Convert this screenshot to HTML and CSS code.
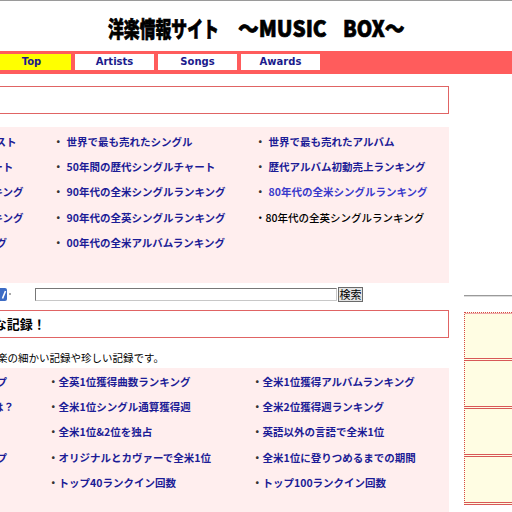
FILE: index.html
```html
<!DOCTYPE html>
<html lang="ja">
<head>
<meta charset="utf-8">
<title>洋楽情報サイト ～MUSIC BOX～</title>
<link rel="stylesheet" href="styles.css">
</head>
<body>
<header class="header">
  <h1 class="site-title"><span class="t-part t-jp"><span class="t-text">洋楽情報サイト　</span></span><span class="t-part t-en1"><span class="t-text">～MUSIC　</span></span><span class="t-part t-en2"><span class="t-text">BOX～</span></span></h1>
  <nav class="nav">
    <a class="tab tab-active" href="#">Top</a>
    <a class="tab" href="#">Artists</a>
    <a class="tab" href="#">Songs</a>
    <a class="tab" href="#">Awards</a>
  </nav>
</header>
<div class="page">
  <main class="main">
    <h2 class="box-title">歴代ランキング</h2>
    <ul class="panel panel-rank">
      <li>・<a href="#">全米1位獲得アーティストリスト</a></li>
      <li>・<a href="#">世界で最も売れたシングル</a></li>
      <li>・<a href="#">世界で最も売れたアルバム</a></li>
      <li>・<a href="#">60年代の全米シングルチャート</a></li>
      <li>・<a href="#">50年間の歴代シングルチャート</a></li>
      <li>・<a href="#">歴代アルバム初動売上ランキング</a></li>
      <li>・<a href="#">70年代の全米シングルランキング</a></li>
      <li>・<a href="#">90年代の全米シングルランキング</a></li>
      <li>・<a class="hover" href="#">80年代の全米シングルランキング</a></li>
      <li>・<a href="#">70年代の全英シングルランキング</a></li>
      <li>・<a href="#">90年代の全英シングルランキング</a></li>
      <li class="plain">・80年代の全英シングルランキング</li>
      <li>・<a href="#">全米1位連続獲得週ランキング</a></li>
      <li>・<a href="#">00年代の全米アルバムランキング</a></li>
      <li></li>
    </ul>
    <form class="search" action="#">
      <svg class="g-icon" width="16" height="13" viewBox="0 0 16 13"><rect x="0" y="0" width="16" height="13" rx="2" fill="#3d6cc4"/><path d="M11.5 10.5 L14.5 3" stroke="#fff" stroke-width="1.6" fill="none"/></svg>
      <span class="dot"></span>
      <input class="search-input" type="text">
      <button class="search-btn" type="button">検索</button>
    </form>
    <h2 class="box-title">全米チャートの様々な記録！</h2>
    <p class="desc">ビルボードを中心とした洋楽の細かい記録や珍しい記録です。</p>
    <ul class="panel panel-record">
      <li>・<a href="#">全米1位獲得数のトップグループ</a></li>
      <li>・<a href="#">全英1位獲得曲数ランキング</a></li>
      <li>・<a href="#">全米1位獲得アルバムランキング</a></li>
      <li>・<a href="#">トップ10入りが最も多い歌手は？</a></li>
      <li>・<a href="#">全米1位シングル通算獲得週</a></li>
      <li>・<a href="#">全米2位獲得週ランキング</a></li>
      <li>・<a href="#">全米1位獲得数ランキング</a></li>
      <li>・<a href="#">全米1位&amp;2位を独占</a></li>
      <li>・<a href="#">英語以外の言語で全米1位</a></li>
      <li>・<a href="#">全英1位獲得数のトップグループ</a></li>
      <li>・<a href="#">オリジナルとカヴァーで全米1位</a></li>
      <li>・<a href="#">全米1位に登りつめるまでの期間</a></li>
      <li>・<a href="#">トップ10ランクイン回数</a></li>
      <li>・<a href="#">トップ40ランクイン回数</a></li>
      <li>・<a href="#">トップ100ランクイン回数</a></li>
    </ul>
  </main>
  <aside class="side">
    <hr class="side-rule">
    <div class="side-box">
      <div class="side-item first"></div>
      <div class="side-item"></div>
      <div class="side-item"></div>
      <div class="side-item"></div>
    </div>
  </aside>
</div>
</body>
</html>
```
FILE: styles.css
```css
html {
  overflow: hidden;
}
body {
  margin: 0;
  background: #fff;
  color: #000;
  font-family: "Noto Sans CJK JP", sans-serif;
}
.header {
  border-top: 1px solid #9a9a9a;
}
.site-title {
  margin: 0;
  height: 50px;
  padding-top: 2px;
  box-sizing: border-box;
  display: flex;
  justify-content: center;
  align-items: center;
  font-weight: 900;
  line-height: 1;
  white-space: nowrap;
  -webkit-text-stroke: 0.7px #000;
}
.t-part {
  flex: none;
  display: block;
}
.t-text {
  display: inline-block;
  transform-origin: left center;
}
.t-jp {
  width: 130px;
  font-size: 22px;
}
.t-jp .t-text {
  transform: scaleX(0.72);
}
.t-en1 {
  width: 105px;
  font-size: 23px;
}
.t-en1 .t-text {
  transform: scaleX(0.9);
}
.t-en2 {
  width: 61px;
  font-size: 23px;
}
.t-en2 .t-text {
  transform: scaleX(0.86);
}
.nav {
  display: flex;
  gap: 4px;
  height: 23px;
  padding: 3px 0 4px;
  box-sizing: border-box;
  background: #ff5c5c;
}
.tab {
  flex: none;
  width: 79px;
  height: 16px;
  line-height: 16px;
  text-align: center;
  background: #fff;
  color: #1a1a8c;
  font-family: "DejaVu Sans", sans-serif;
  font-size: 10px;
  font-weight: bold;
  text-decoration: none;
}
.tab:first-child {
  margin-left: -8px;
}
.tab-active {
  background: #ffff00;
}
.page {
  display: flex;
  align-items: flex-start;
  margin: 12px 0 0 -160px;
}
.main {
  flex: none;
  width: 609px;
}
.side {
  flex: none;
  width: 200px;
  margin-left: 15px;
  padding-top: 209px;
}
.box-title {
  margin: 0;
  height: 28px;
  box-sizing: border-box;
  border: 1px solid #e06464;
  padding-left: 36px;
  font-size: 13px;
  font-weight: bold;
  line-height: 26px;
  white-space: nowrap;
}
.panel {
  display: grid;
  margin: 0;
  list-style: none;
  background: #ffeeee;
  font-size: 10.5px;
  font-weight: bold;
  color: #333;
  white-space: nowrap;
}
.panel a {
  color: #1c1c96;
  text-decoration: none;
}
.panel a.hover {
  color: #3a3acb;
}
.panel .plain {
  color: #000;
  font-weight: 500;
}
.panel-rank {
  margin-top: 13px;
  grid-template-columns: 202px 202px 1fr;
  grid-auto-rows: 25.2px;
  line-height: 25.2px;
  padding: 2px 0 28px 11px;
}
.panel-rank a {
  margin-left: 3px;
}
.panel-record {
  grid-template-columns: 204px 204px 1fr;
  grid-auto-rows: 25.2px;
  line-height: 25.2px;
  padding: 1px 0 30px 4px;
}
.search {
  display: flex;
  align-items: center;
  height: 15px;
  margin: 4px 0 0;
  padding-left: 151px;
}
.g-icon {
  flex: none;
  display: block;
}
.dot {
  flex: none;
  width: 2px;
  height: 2px;
  margin-left: 2px;
  background: #aaa;
}
.search-input {
  flex: none;
  width: 302px;
  height: 13px;
  margin: 0 0 0 24px;
  padding: 0;
  box-sizing: border-box;
  border: 1px solid;
  border-color: #777 #c8c8c8 #c8c8c8 #777;
  background: #fff;
}
.search-btn {
  flex: none;
  width: 25px;
  height: 15px;
  margin-left: 1px;
  padding: 0;
  box-sizing: border-box;
  border: 1px solid #6a6a6a;
  background: #e4e4e4;
  font-family: "Noto Sans CJK JP", sans-serif;
  font-size: 11px;
  line-height: 13px;
  color: #000;
}
.search + .box-title {
  margin-top: 8px;
}
.desc {
  margin: 10px 0 0;
  padding-left: 31px;
  height: 20px;
  font-size: 10.5px;
  line-height: 20px;
  white-space: nowrap;
}
.side-rule {
  margin: 0;
  height: 0;
  border: 0;
  border-top: 1px solid #9a9a9a;
  border-bottom: 1px solid #dcdcdc;
}
.side-box {
  margin-top: 15px;
  border-top: 1px dotted #d54848;
  border-left: 1px dotted #d54848;
  background: #fffde3;
}
.side-item {
  height: 45px;
  border-bottom: 3px double #d85858;
}
.side-item.first {
  border-top: 1px solid #eaa;
  height: 44px;
}
```
